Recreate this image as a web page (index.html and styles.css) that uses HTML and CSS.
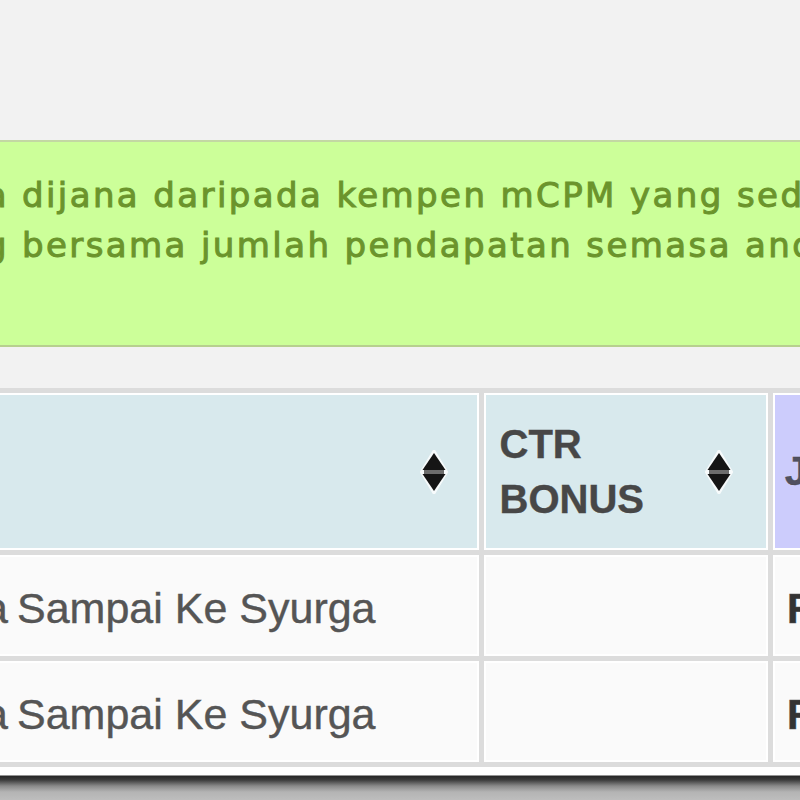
FILE: index.html
```html
<!DOCTYPE html>
<html lang="ms">
<head>
    <meta charset="UTF-8">
    <meta name="viewport" content="width=device-width, initial-scale=1.0">
    <title>Pendapatan mCPM</title>
    <link rel="stylesheet" href="styles.css">
</head>
<body>
    <div class="topbar"></div>

    <!-- info box above the earnings table -->
    <div class="notice">
        <div class="line">
            <span class="lead"><span>telah berjaya</span></span>
            <span class="rest">dijana daripada kempen mCPM yang sedang berjalan</span>
        </div>
        <div class="line">
            <span class="lead"><span>dipaparkan seiring</span></span>
            <span class="rest">bersama jumlah pendapatan semasa anda.</span>
        </div>
    </div>

    <table class="earnings">
        <thead>
            <tr>
                <th class="col-name">
                    <div class="head">
                        <span></span>
                        <svg class="sort" width="28" height="44" viewBox="0 0 28 44">
                            <path d="M14 2 L26 22 L14 42 L2 22 Z" fill="none" stroke="#fff" stroke-width="4" stroke-opacity="0.8"/>
                            <path d="M14 3 L25.5 20 H2.5 Z" fill="#151515"/>
                            <path d="M2.5 24 H25.5 L14 41 Z" fill="#151515"/>
                            <rect x="4" y="20" width="20" height="4" fill="#6d6d6d"/>
                        </svg>
                    </div>
                </th>
                <th class="col-bonus">
                    <div class="head">
                        <span class="label">CTR<br>BONUS</span>
                        <svg class="sort" width="28" height="44" viewBox="0 0 28 44">
                            <path d="M14 2 L26 22 L14 42 L2 22 Z" fill="none" stroke="#fff" stroke-width="4" stroke-opacity="0.8"/>
                            <path d="M14 3 L25.5 20 H2.5 Z" fill="#151515"/>
                            <path d="M2.5 24 H25.5 L14 41 Z" fill="#151515"/>
                            <rect x="4" y="20" width="20" height="4" fill="#6d6d6d"/>
                        </svg>
                    </div>
                </th>
                <th class="col-total">
                    <span class="label">JUMLAH</span>
                </th>
            </tr>
        </thead>
        <tbody>
            <tr>
                <td class="name"><span class="lead"><span>Cinta</span></span><span class="rest">Sampai Ke Syurga</span></td>
                <td></td>
                <td class="amount">RM 0.42</td>
            </tr>
            <tr>
                <td class="name"><span class="lead"><span>Cinta</span></span><span class="rest">Sampai Ke Syurga</span></td>
                <td></td>
                <td class="amount">RM 0.38</td>
            </tr>
        </tbody>
    </table>

    <div class="shade"></div>
</body>
</html>
```

FILE: styles.css
```css
body{
    margin: 0;
    background-color: #f2f2f2;
    overflow: hidden;
    width: 800px;
    height: 800px;
}
.topbar{
    height: 140px;
}

/* green info box */
.notice{
    height: 175px;
    background-color: #ccff99;
    border-top: 2px solid #c3d8a3;
    border-bottom: 2px solid #b7d08f;
    padding-top: 28px;
    font-family: "DejaVu Sans", Verdana, sans-serif;
    font-size: 34px;
    letter-spacing: 2.4px;
    line-height: 50px;
    color: #6b942c;
    -webkit-text-stroke: 1px #6b942c;
}
.line{
    display: flex;
    white-space: nowrap;
}
/* the start of each line runs off the left edge */
.lead{
    display: flex;
    justify-content: flex-end;
    width: 9px;
    flex: none;
}
.line .rest{
    padding-left: 13px;
}

/* earnings table */
.earnings{
    margin-top: 41px;
    margin-left: -120px;
    border-collapse: separate;
    border-spacing: 5px;
    background-color: #dcdcdc;
    table-layout: fixed;
    width: 1200px;
}
.earnings th,
.earnings td{
    box-sizing: border-box;
    border: 2px solid #fff;
    padding: 0;
    vertical-align: middle;
    white-space: nowrap;
    overflow: hidden;
}
.earnings th{
    height: 157px;
    background-color: #d8e9ed;
    font-family: "Liberation Sans", Arial, sans-serif;
    font-weight: bold;
    font-size: 40px;
    color: #474747;
    text-align: left;
}
.col-name{
    width: 589px;
}
.col-bonus{
    width: 282px;
}
.col-total{
    width: 300px;
}
.earnings th.col-total{
    background-color: #ccccfc;
    padding-left: 10px;
    color: #505060;
}
.head{
    display: flex;
    align-items: center;
    justify-content: space-between;
    padding-right: 29px;
}
.col-bonus .head{
    padding-left: 14px;
    padding-right: 33px;
}
.label{
    line-height: 55px;
    -webkit-text-stroke: 0.4px #474747;
}
.sort{
    display: block;
    flex: none;
}

.earnings td{
    height: 101px;
    background-color: #fafafa;
    font-family: "Liberation Sans", Arial, sans-serif;
    font-size: 43px;
    color: #555;
    -webkit-text-stroke: 0.4px #555;
}
.earnings td.name{
    padding-left: 113px;
    padding-top: 6px;
}
.name .lead{
    display: inline-flex;
    width: 8px;
    vertical-align: top;
}
.name .rest{
    padding-left: 9px;
}
.earnings td.amount{
    padding-left: 12px;
    padding-top: 6px;
    font-weight: bold;
    color: #333;
}

/* dark edge along the bottom */
.shade{
    height: 40px;
    background: linear-gradient(#fff 0, #fff 8px, #262626 9px, #3c3c3c 13px, #8a8a8a 19px, #b4b4b4 25px, #c6c6c6 40px);
}
```
